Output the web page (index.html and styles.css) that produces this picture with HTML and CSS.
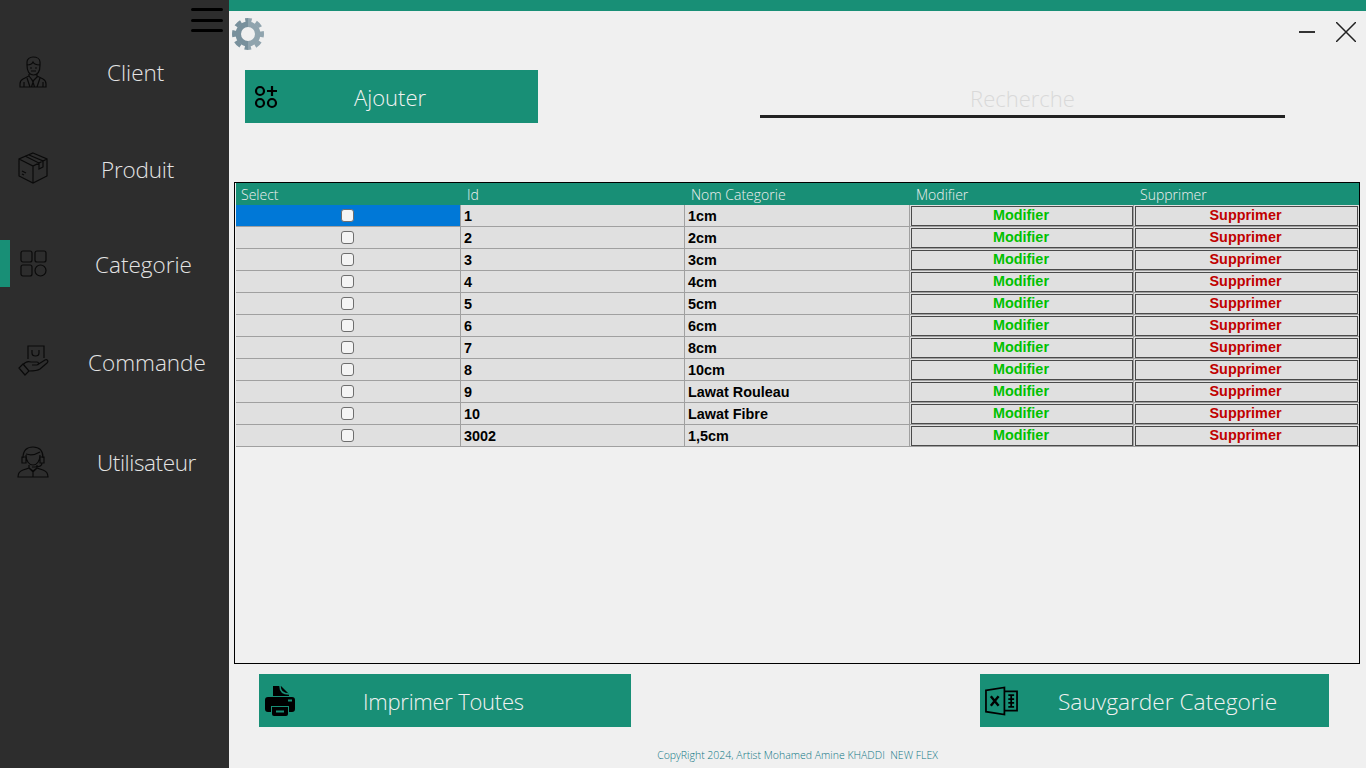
FILE: index.html
```html
<!DOCTYPE html>
<html lang="fr">
<head>
    <meta charset="UTF-8" />
    <title>Categorie</title>
    <link rel="stylesheet" href="styles.css">
</head>
<body>
    <div id="app">
        <aside class="sidebar">
            <div class="burger"><span></span><span></span><span></span></div>
            <nav class="menu">
                <a class="menu-item item-client" href="#">
                    <svg class="menu-icon" viewBox="0 0 32 32"><path d="M10 9V6c0-3 3-5 6-5 4 0 7 2 7 5v3M10 9c0 6 2 10 6.500 10S23 15 23 9c-3 0-6-1-7-3-1 2-3 3-6 3zM13 12h2M18 12h2M14 15h5M12 18v2l-6 3c-2 1-3 3-3 5v3h26v-3c0-2-1-4-3-5l-6-3v-2M12 20l4 5 5-5M15 24l1 2 1-2M14.500 31l1.500-5 1.500 5M10 22l3 9M23 22l-3 9M7 26v5M26 26v5"/></svg>
                    <span class="menu-label">Client</span>
                </a>
                <a class="menu-item item-produit" href="#">
                    <svg class="menu-icon" viewBox="0 0 32 32"><path d="M16 1L30 7v17L16 31 2 24V7zM2 7l14 7 14-7M16 14v17M8 4l14 7v6l4-2V9L12 3M5 19l4 2M5 22l2 1"/></svg>
                    <span class="menu-label">Produit</span>
                </a>
                <a class="menu-item item-categorie active" href="#">
                    <svg class="menu-icon" viewBox="0 0 32 32"><rect x="4" y="3" width="11" height="11" rx="2"/><rect x="18" y="3" width="11" height="11" rx="2"/><rect x="4" y="17" width="11" height="11" rx="2"/><circle cx="23.500" cy="22.500" r="5.500"/></svg>
                    <span class="menu-label">Categorie</span>
                </a>
                <a class="menu-item item-commande" href="#">
                    <svg class="menu-icon" viewBox="0 0 32 32"><path d="M11 14V1h16v12M15 5v3c0 4 7 4 7 0V5M2 23l6 7 4-4-6-7zM6 20c2-3 5-4 8-3h6c2 0 2 3 0 3h-5M20 20l8-5c2-1 4 1 2 3l-7 6c-3 2-7 2-11 2"/></svg>
                    <span class="menu-label">Commande</span>
                </a>
                <a class="menu-item item-utilisateur" href="#">
                    <svg class="menu-icon" viewBox="0 0 32 32"><path d="M6 12C6 4 10 1 16 1s10 3 10 11M9 8c3 1 9 1 14-2M9 9c0 6 3 10 7 10s7-4 7-10M5 11h4v6H5zM23 11h4v6h-4zM25 17c0 3-3 4-7 4h-3M12 19v3l-6 2c-3 1-5 3-5 7h30c0-4-2-6-5-7l-6-2v-3M12 22l4 3 4-3-4 4zM16 26v5"/></svg>
                    <span class="menu-label">Utilisateur</span>
                </a>
            </nav>
        </aside>
        <main class="content">
            <div class="top-strip"></div>
            <header class="title-row">
                <svg class="gear" viewBox="0 0 32 32">
                    <defs>
                        <clipPath id="gear-left"><rect width="16" height="32"/></clipPath>
                        <clipPath id="gear-right"><rect x="16" width="16" height="32"/></clipPath>
                    </defs>
                    <g class="gear-half" stroke="#78909c" clip-path="url(#gear-left)">
                        <circle cx="16" cy="16" r="9.750" stroke-width="5.500"/>
                        <circle cx="16" cy="16" r="14" stroke-width="4" stroke-dasharray="6.500 4.500" stroke-dashoffset="3.250"/>
                    </g>
                    <g class="gear-half" stroke="#90a4ae" clip-path="url(#gear-right)">
                        <circle cx="16" cy="16" r="9.750" stroke-width="5.500"/>
                        <circle cx="16" cy="16" r="14" stroke-width="4" stroke-dasharray="6.500 4.500" stroke-dashoffset="3.250"/>
                    </g>
                </svg>
                <div class="win-buttons">
                    <svg class="win-min" viewBox="0 0 16 3"><rect width="16" height="2" y="0" fill="#333"/></svg>
                    <svg class="win-close" viewBox="0 0 20 20"><path d="M0 0l20 20M20 0L0 20" stroke="#222" stroke-width="1.500"/></svg>
                </div>
            </header>
            <div class="action-row">
                <a class="btn btn-add" href="#">
                    <svg class="btn-icon icon-add" viewBox="0 0 24 24"><circle cx="6" cy="6" r="4"/><circle cx="6" cy="18" r="4"/><circle cx="18" cy="18" r="4"/><path d="M18 1v10M13 6h10"/></svg>
                    <span>Ajouter</span>
                </a>
                <div class="search"><span>Recherche</span></div>
            </div>
            <div class="grid-wrap">
                <table class="grid">
                    <colgroup>
                        <col class="col-wide"><col class="col-narrow"><col class="col-wide"><col class="col-narrow"><col class="col-wide">
                    </colgroup>
                    <thead>
                        <tr><th>Select</th><th>Id</th><th>Nom Categorie</th><th>Modifier</th><th>Supprimer</th></tr>
                    </thead>
                    <tbody>
                        <tr><td class="check selected"><span class="box"></span></td><td>1</td><td>1cm</td><td class="cell-btn"><button class="edit">Modifier</button></td><td class="cell-btn"><button class="del">Supprimer</button></td></tr>
                        <tr><td class="check"><span class="box"></span></td><td>2</td><td>2cm</td><td class="cell-btn"><button class="edit">Modifier</button></td><td class="cell-btn"><button class="del">Supprimer</button></td></tr>
                        <tr><td class="check"><span class="box"></span></td><td>3</td><td>3cm</td><td class="cell-btn"><button class="edit">Modifier</button></td><td class="cell-btn"><button class="del">Supprimer</button></td></tr>
                        <tr><td class="check"><span class="box"></span></td><td>4</td><td>4cm</td><td class="cell-btn"><button class="edit">Modifier</button></td><td class="cell-btn"><button class="del">Supprimer</button></td></tr>
                        <tr><td class="check"><span class="box"></span></td><td>5</td><td>5cm</td><td class="cell-btn"><button class="edit">Modifier</button></td><td class="cell-btn"><button class="del">Supprimer</button></td></tr>
                        <tr><td class="check"><span class="box"></span></td><td>6</td><td>6cm</td><td class="cell-btn"><button class="edit">Modifier</button></td><td class="cell-btn"><button class="del">Supprimer</button></td></tr>
                        <tr><td class="check"><span class="box"></span></td><td>7</td><td>8cm</td><td class="cell-btn"><button class="edit">Modifier</button></td><td class="cell-btn"><button class="del">Supprimer</button></td></tr>
                        <tr><td class="check"><span class="box"></span></td><td>8</td><td>10cm</td><td class="cell-btn"><button class="edit">Modifier</button></td><td class="cell-btn"><button class="del">Supprimer</button></td></tr>
                        <tr><td class="check"><span class="box"></span></td><td>9</td><td>Lawat Rouleau</td><td class="cell-btn"><button class="edit">Modifier</button></td><td class="cell-btn"><button class="del">Supprimer</button></td></tr>
                        <tr><td class="check"><span class="box"></span></td><td>10</td><td>Lawat Fibre</td><td class="cell-btn"><button class="edit">Modifier</button></td><td class="cell-btn"><button class="del">Supprimer</button></td></tr>
                        <tr><td class="check"><span class="box"></span></td><td>3002</td><td>1,5cm</td><td class="cell-btn"><button class="edit">Modifier</button></td><td class="cell-btn"><button class="del">Supprimer</button></td></tr>
                    </tbody>
                </table>
            </div>
            <div class="bottom-row">
                <a class="btn btn-print" href="#">
                    <svg class="btn-icon icon-print" viewBox="0 0 30 30"><path class="solid" d="M8 0h8l8 8v2H8z"/><path d="M15 0c0 5 3 8 9 8" class="cut"/><path class="solid" d="M3 11h24a3 3 0 0 1 3 3v9a3 3 0 0 1-3 3h-3v-6H6v6H3a3 3 0 0 1-3-3v-9a3 3 0 0 1 3-3z"/><path class="solid" d="M7 21h16v7a2 2 0 0 1-2 2H9a2 2 0 0 1-2-2z"/><rect class="hole" x="11" y="24.500" width="8" height="2"/><rect class="hole" x="23" y="13.500" width="4" height="2"/></svg>
                    <span>Imprimer Toutes</span>
                </a>
                <a class="btn btn-save" href="#">
                    <svg class="btn-icon icon-excel" viewBox="0 0 34 30"><path d="M1 4L20 1v28L1 26zM20 5h13v20H20M24 9h6M24 13h6M24 17h6M24 21h6M27 9v12"/><path d="M6 10l8 10M14 10L6 20" class="thick"/></svg>
                    <span>Sauvgarder Categorie</span>
                </a>
            </div>
            <footer class="copy">CopyRight 2024, Artist Mohamed Amine KHADDI&nbsp; NEW FLEX</footer>
        </main>
    </div>
</body>
</html>
```

FILE: styles.css
```css
html,body{
    margin: 0;
    padding: 0;
    height: 100%;
}
body{
    font-family: "Open Sans", "Liberation Sans", sans-serif;
    font-weight: 300;
    background: #f0f0f0;
    overflow: hidden;
}
a{
    text-decoration: none;
}
#app{
    display: flex;
    height: 768px;
}

/* left menu */
.sidebar{
    width: 229px;
    flex: none;
    background: #2d2d2d;
    box-sizing: border-box;
    padding-top: 8px;
}
.burger{
    width: 32px;
    height: 24px;
    margin-left: 191px;
    margin-bottom: -8px;
    display: flex;
    flex-direction: column;
    justify-content: space-between;
}
.burger span{
    height: 3px;
    border-radius: 2px;
    background: #000;
}
.menu-item{
    height: 96px;
    display: flex;
    align-items: center;
    position: relative;
    padding-left: 17px;
    color: #e4e4e4;
    font-size: 22.500px;
}
.menu-icon{
    width: 32px;
    height: 32px;
    flex: none;
    fill: none;
    stroke: #0a0a0a;
    stroke-width: 1.200;
}
.item-client .menu-label{ margin-left: 58px; }
.item-produit .menu-label{ margin-left: 52px; letter-spacing: -.2px; padding-top: 2px; }
.item-categorie .menu-label{ margin-left: 46px; }
.item-commande .menu-label{ margin-left: 39px; padding-top: 2px; }
.item-utilisateur .menu-label{ margin-left: 48px; letter-spacing: -.4px; }
.item-commande{
    margin-top: 1px;
}
.item-utilisateur{
    margin-top: 5px;
}
.active::before{
    content: "";
    position: absolute;
    left: 0;
    top: 24px;
    width: 10px;
    height: 47px;
    background: #188f76;
}

/* right side */
.content{
    flex: 1;
    display: flex;
    flex-direction: column;
    min-width: 0;
}
.top-strip{
    height: 11px;
    background: #188f76;
}
.title-row{
    height: 59px;
    display: flex;
    justify-content: space-between;
    padding-left: 3px;
    padding-right: 10px;
}
.gear{
    width: 32px;
    height: 32px;
    margin-top: 7px;
}
.gear-half{
    fill: none;
}
.win-buttons{
    display: flex;
    gap: 21px;
    margin-top: 11px;
}
.win-min{
    width: 16px;
    height: 3px;
    margin-top: 9px;
}
.win-close{
    width: 20px;
    height: 20px;
}

.btn{
    height: 53px;
    background: #188f76;
    color: #f2f2f2;
    font-size: 22px;
    display: flex;
    align-items: center;
    position: relative;
    box-sizing: border-box;
}
.btn-icon{
    flex: none;
}
.action-row{
    display: flex;
    height: 53px;
    padding-left: 16px;
}
.btn-add{
    width: 293px;
    padding-left: 9px;
}
.icon-add{
    width: 24px;
    height: 24px;
    fill: none;
    stroke: #000;
    stroke-width: 2.200;
}
.btn-add span{
    margin-left: 76px;
}
.search{
    width: 525px;
    height: 45px;
    margin-left: 222px;
    border-bottom: 3px solid #222;
    box-sizing: content-box;
    display: flex;
    align-items: flex-end;
    justify-content: center;
    color: #d9d9d9;
    font-size: 22px;
    line-height: 30px;
    padding-bottom: 0;
}
.search span{
    margin-bottom: 2px;
}

/* datagrid */
.grid-wrap{
    height: 480px;
    margin: 59px 6px 0 5px;
    border: 1px solid #000;
    background: #f0f0f0;
    padding-left: 1px;
}
.grid{
    border-collapse: separate;
    border-spacing: 0;
    table-layout: fixed;
    width: 1123px;
}
.col-wide{
    width: 225px;
}
.col-narrow{
    width: 224px;
}
.grid th{
    height: 22px;
    padding: 0 0 0 6px;
    background: #188f76;
    color: #f0f0f0;
    font-size: 14px;
    font-weight: 300;
    text-align: left;
    overflow: hidden;
}
.grid th:first-child{
    padding-left: 5px;
}
.grid td{
    height: 22px;
    padding: 1px 0 0 3px;
    background: #e0e0e0;
    border-right: 1px solid #a0a0a0;
    border-bottom: 1px solid #a0a0a0;
    color: #000;
    font-family: "Liberation Sans", Arial, sans-serif;
    font-size: 14.400px;
    font-weight: 700;
    box-sizing: border-box;
    line-height: 20px;
}
.grid td:last-child{
    border-right: 0;
}
.grid .check{
    text-align: center;
    padding: 0 1px 0 0;
    line-height: 0;
}
.grid .selected{
    background: #0078d7;
}
.box{
    display: inline-block;
    width: 11px;
    height: 11px;
    background: #f4f4f4;
    border: 1px solid #6e6e6e;
    border-radius: 3px;
}
.grid .cell-btn{
    padding: 1px 0 0 1px;
    line-height: 0;
}
.grid .cell-btn:last-child{
    padding-right: 1px;
}
.cell-btn button{
    width: 100%;
    height: 20px;
    padding: 0 2px 3px 0;
    background: #e0e0e0;
    border: 1px solid #4a4a4a;
    font-family: "Liberation Sans", Arial, sans-serif;
    font-size: 14.400px;
    font-weight: 700;
    line-height: 16px;
    display: block;
}
.edit{
    color: #00c000;
}
.del{
    color: #c00000;
}

.bottom-row{
    display: flex;
    justify-content: space-between;
    margin-top: 10px;
    padding: 0 37px 0 30px;
}
.btn-print{
    width: 372px;
    padding-left: 6px;
}
.btn-print span{
    margin-left: 68px;
    letter-spacing: -.25px;
}
.icon-print{
    width: 30px;
    height: 30px;
}
.icon-print .solid{
    fill: #000;
}
.icon-print .cut{
    fill: none;
    stroke: #188f76;
    stroke-width: 1.500;
}
.icon-print .hole{
    fill: #188f76;
}
.btn-save{
    width: 349px;
    padding-left: 5px;
}
.btn-save span{
    margin-left: 40px;
    font-size: 22.700px;
    padding-top: 2px;
}
.icon-excel{
    width: 33px;
    height: 30px;
    fill: none;
    stroke: #000;
    stroke-width: 1.800;
}
.icon-excel .thick{
    stroke-width: 2.500;
}
.copy{
    margin-top: 20px;
    text-align: center;
    font-size: 10.500px;
    color: #0e7685;
    line-height: 16px;
}
```
